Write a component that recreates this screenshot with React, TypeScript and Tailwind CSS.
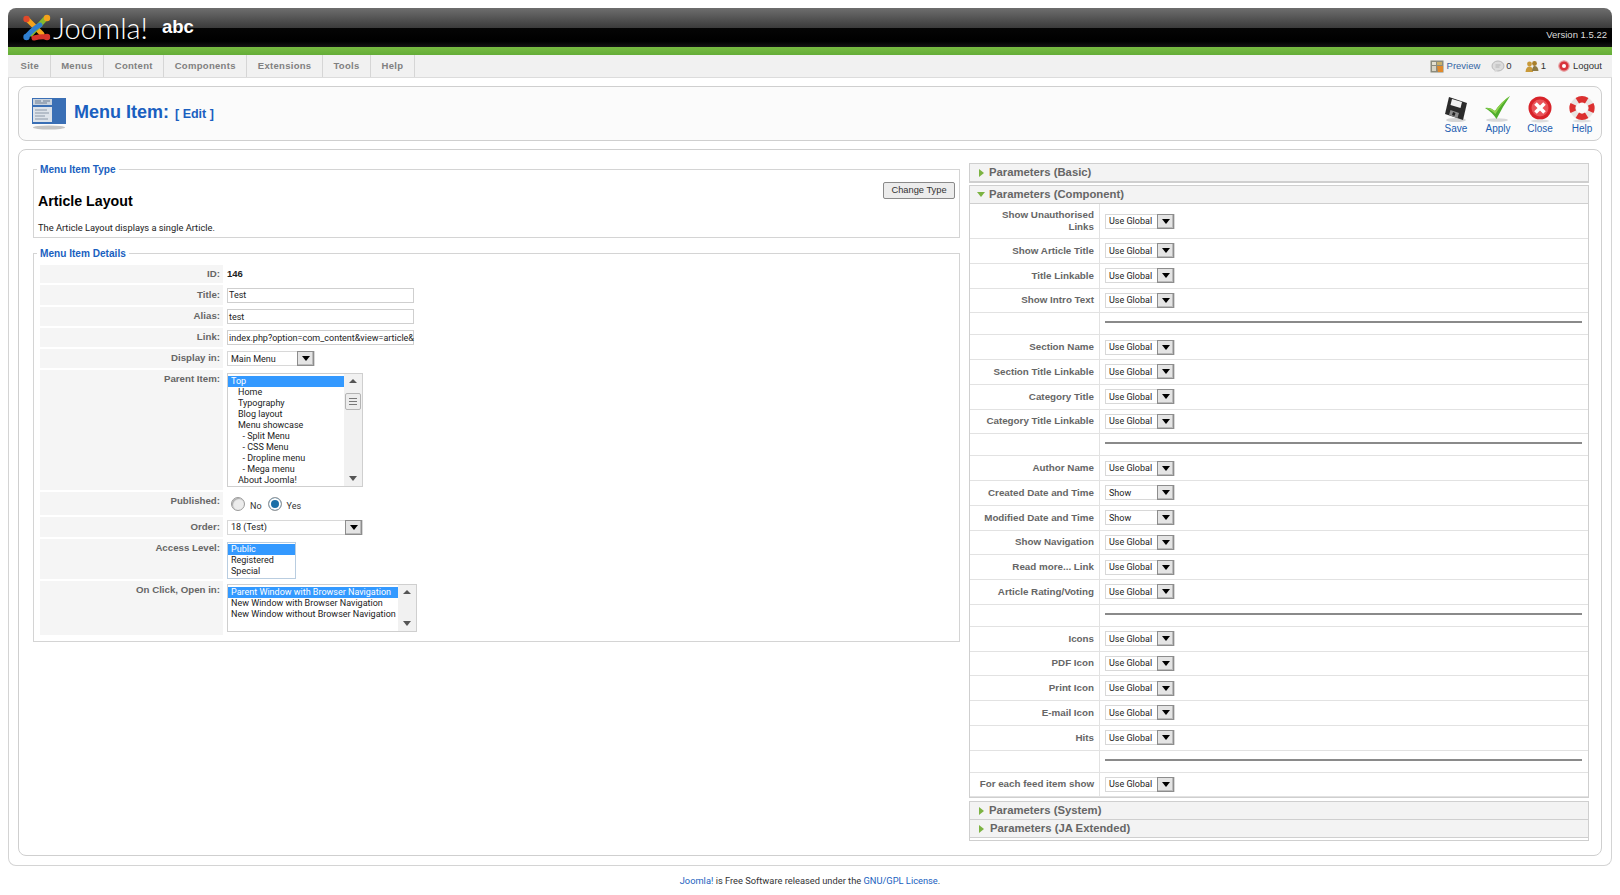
import React from "react";

const font = "font-['Liberation_Sans',Arial,sans-serif]";
const fieldFont = "font-['Roboto',Arial,sans-serif] text-[9px]";
const bodyFont = "font-['Roboto',Arial,sans-serif] text-[9.3px]";

const menuItems = ["Site", "Menus", "Content", "Components", "Extensions", "Tools", "Help"];

type ParamRow = { label: string; value?: string; tall?: boolean } | "sep";

const paramRows: ParamRow[] = [
  { label: "Show Unauthorised Links", tall: true },
  { label: "Show Article Title" },
  { label: "Title Linkable" },
  { label: "Show Intro Text" },
  "sep",
  { label: "Section Name" },
  { label: "Section Title Linkable" },
  { label: "Category Title" },
  { label: "Category Title Linkable" },
  "sep",
  { label: "Author Name" },
  { label: "Created Date and Time", value: "Show" },
  { label: "Modified Date and Time", value: "Show" },
  { label: "Show Navigation" },
  { label: "Read more... Link" },
  { label: "Article Rating/Voting" },
  "sep",
  { label: "Icons" },
  { label: "PDF Icon" },
  { label: "Print Icon" },
  { label: "E-mail Icon" },
  { label: "Hits" },
  "sep",
  { label: "For each feed item show" },
];

const parentItems = [
  "Home",
  "Typography",
  "Blog layout",
  "Menu showcase",
  "\u00a0\u00a0- Split Menu",
  "\u00a0\u00a0- CSS Menu",
  "\u00a0\u00a0- Dropline menu",
  "\u00a0\u00a0- Mega menu",
  "About Joomla!",
];

const JoomlaMark = () => (
  <svg width="30" height="28" viewBox="0 0 30 28" fill="none" strokeLinecap="round">
    <path d="M5 5 L20 20" stroke="#f4a21c" strokeWidth="5" />
    <path d="M24 4 L9 20" stroke="#86b82e" strokeWidth="5" />
    <path d="M5 22 Q12 14 18 11" stroke="#2f7fd0" strokeWidth="5" />
    <path d="M12 24 Q19 22 25 23" stroke="#d5352b" strokeWidth="5" />
    <circle cx="4.5" cy="5" r="3.2" fill="#e0482a" />
    <circle cx="25" cy="4" r="3.2" fill="#f4a21c" />
    <circle cx="4.5" cy="23" r="3.2" fill="#2f7fd0" />
    <circle cx="25" cy="23" r="3.2" fill="#d5352b" />
  </svg>
);

const PageIcon = () => (
  <svg width="36" height="34" viewBox="0 0 36 34">
    <rect x="1" y="1" width="34" height="26" fill="#3a6fb5" />
    <rect x="2" y="2" width="19" height="6" fill="#c9d3de" />
    <rect x="2" y="10" width="19" height="15" fill="#dde3ea" />
    <path d="M4 13h12M4 16h14M4 19h10M4 22h13" stroke="#8b98a8" strokeWidth="1" />
    <path d="M4 4h6M12 4h7M4 6h12" stroke="#6f7f93" strokeWidth="1" />
    <ellipse cx="18" cy="30.5" rx="16" ry="2" fill="#c4c4c4" />
  </svg>
);

const SaveIcon = () => (
  <svg width="30" height="28" viewBox="0 0 30 28">
    <ellipse cx="15" cy="25" rx="10" ry="2" fill="#d4d4d4" />
    <path d="M8 2 L26 8 L22 25 L4 19 Z" fill="#2b2b2b" />
    <path d="M11 4 L21 7 L19.5 13 L9.5 10 Z" fill="#f2f2f2" />
    <path d="M9.5 15 L18 18 L16.5 23 L8 20 Z" fill="#8d8d8d" />
    <path d="M12 17 L14.5 18 L13.5 21 L11 20 Z" fill="#222" />
  </svg>
);

const ApplyIcon = () => (
  <svg width="30" height="28" viewBox="0 0 30 28">
    <ellipse cx="14" cy="25" rx="11" ry="1.8" fill="#d8d8d8" />
    <path d="M2 13 Q7 12 12 16 Q18 7 27 1 Q20 11 13.5 24 Q9 17 2 13 Z" fill="#4fae2c" />
    <path d="M3 13 Q8 12.5 12 16 Q18 7 27 1 Q19 8 12.5 19 Q8 15 3 13 Z" fill="#8fd14f" />
  </svg>
);

const CloseIcon = () => (
  <svg width="28" height="28" viewBox="0 0 28 28">
    <circle cx="14" cy="13" r="11.5" fill="#d8232a" />
    <circle cx="14" cy="13" r="8.5" fill="#ea5359" />
    <path d="M9.5 8.5 L18.5 17.5 M18.5 8.5 L9.5 17.5" stroke="#fff" strokeWidth="3.6" />
    <ellipse cx="14" cy="26" rx="9" ry="1.5" fill="#ddd" />
  </svg>
);

const HelpIcon = () => (
  <svg width="28" height="28" viewBox="0 0 28 28">
    <ellipse cx="14" cy="26" rx="9" ry="1.5" fill="#ddd" />
    <circle cx="14" cy="13" r="9" fill="none" stroke="#e8e4e2" strokeWidth="6" />
    <path d="M7.6 3 A12 12 0 0 1 20.4 3 L17 8.6 A5 5 0 0 0 11 8.6 Z" fill="#dc3030" />
    <path d="M2.5 8 A12 12 0 0 0 2.5 18 L8 15.5 A5 5 0 0 1 8 10.5 Z" fill="#dc3030" />
    <path d="M25.5 8 A12 12 0 0 1 25.5 18 L20 15.5 A5 5 0 0 0 20 10.5 Z" fill="#dc3030" />
    <path d="M7.6 23 A12 12 0 0 0 20.4 23 L17 17.5 A5 5 0 0 1 11 17.5 Z" fill="#dc3030" />
  </svg>
);

const PreviewIcon = () => (
  <svg width="14" height="13" viewBox="0 0 14 13">
    <rect x="0.5" y="0.5" width="13" height="12" fill="#8b8b7d" />
    <rect x="2" y="2" width="4" height="3" fill="#e4e0cf" />
    <rect x="7" y="2" width="5" height="3" fill="#c9b06a" />
    <rect x="2" y="6" width="4" height="5" fill="#d8d4c4" />
    <path d="M7 6h6v6H8z" fill="#e08a2c" />
  </svg>
);

const MessageIcon = () => (
  <svg width="14" height="13" viewBox="0 0 14 13">
    <ellipse cx="7" cy="6" rx="6" ry="5" fill="#dcdcdc" stroke="#b8b8b8" />
    <path d="M4 10 L3.5 12.5 L7 10.5 Z" fill="#dcdcdc" />
    <path d="M4.5 5h5M4.5 7h4" stroke="#aaa" strokeWidth="0.8" />
  </svg>
);

const UsersIcon = () => (
  <svg width="14" height="13" viewBox="0 0 14 13">
    <circle cx="4.5" cy="4" r="2.4" fill="#c99a3a" />
    <circle cx="9.5" cy="3.5" r="2.4" fill="#a97f2a" />
    <path d="M0.5 12 Q1 6.5 4.5 6.5 Q8 6.5 8 12 Z" fill="#c99a3a" />
    <path d="M7 11 Q7.5 6 9.5 6 Q13 6 13.5 11 Z" fill="#8d7a45" />
  </svg>
);

const LogoutIcon = () => (
  <svg width="12" height="13" viewBox="0 0 12 13">
    <circle cx="6" cy="6" r="5.2" fill="#d8343c" stroke="#e7a2a4" strokeWidth="1.2" />
    <circle cx="6" cy="6" r="2" fill="#fff" />
  </svg>
);

const Arrow = ({ grey = false }: { grey?: boolean }) => (
  <span className={`block w-0 h-0 border-x-[4px] border-x-transparent border-t-[5px] ${grey ? "border-t-[#555]" : "border-t-black"}`} />
);

const ArrowUp = () => (
  <span className="block w-0 h-0 border-x-[4px] border-x-transparent border-b-[4px] border-b-[#555]" />
);

const Select = ({ value, width }: { value: string; width: string }) => (
  <div className={`flex items-center justify-between h-[15px] bg-white border border-[#d8d8d8] ${width}`}>
    <span className={`${fieldFont} pl-[3px] pt-[1px] text-[#222] leading-none whitespace-nowrap`}>{value}</span>
    <span className="shrink-0 flex items-center justify-center w-[17px] h-[15px] bg-[#e4e4e4] border border-[#8d8d8d] shadow-[inset_-1px_-1px_0_#bbb]">
      <Arrow />
    </span>
  </div>
);

const Input = ({ value }: { value: string }) => (
  <div className={`${fieldFont} flex items-center w-[187px] h-[15px] bg-white border border-[#cfcfcf] pl-[1px] pt-[1px] text-[#222] whitespace-nowrap leading-none`}>
    {value}
  </div>
);

const Scrollbar = ({ thumb = false }: { thumb?: boolean }) => (
  <div className="relative shrink-0 flex flex-col items-center justify-between w-[18px] bg-[#f1f1f1] py-[5px]">
    <ArrowUp />
    {thumb && (
      <div className="absolute top-[19px] left-[1px] w-[16px] h-[17px] bg-[#ececec] border border-[#b4b4b4] rounded-[2px] flex flex-col items-center justify-center gap-[2px]">
        <span className="block w-[8px] h-px bg-[#777]" />
        <span className="block w-[8px] h-px bg-[#777]" />
        <span className="block w-[8px] h-px bg-[#777]" />
      </div>
    )}
    <Arrow grey />
  </div>
);

const DetailRow = ({
  label,
  height,
  top = false,
  children,
}: {
  label: string;
  height: string;
  top?: boolean;
  children: React.ReactNode;
}) => (
  <div className={`flex ${height}`}>
    <div className={`w-[183px] shrink-0 bg-[#f5f5f5] flex justify-end pr-[3px] text-[9.7px] font-bold text-[#666] ${top ? "items-start pt-[2px]" : "items-center"}`}>
      {label}
    </div>
    <div className={`pl-[4px] flex ${top ? "items-start pt-[3px]" : "items-center"}`}>{children}</div>
  </div>
);

const Radio = ({ checked = false }: { checked?: boolean }) => (
  <span
    className={`block w-[14px] h-[14px] rounded-full border border-[#9b9b9b] ${
      checked ? "bg-[#1b6fa8] shadow-[inset_0_0_0_2px_#fff]" : "bg-[#ececec] shadow-[inset_1px_1px_1px_#aaa]"
    }`}
  />
);

const PanelHeader = ({ title, open = false, extra = false }: { title: string; open?: boolean; extra?: boolean }) => (
  <div className={`flex items-center h-[18px] bg-[#f3f3f3] border-b border-[#cfcfcf] pl-[7px] ${extra ? "gap-[5px]" : "gap-[4px]"}`}>
    <span className="w-[8px] flex justify-center">
      {open ? (
        <span className="block w-0 h-0 border-x-[4px] border-x-transparent border-t-[5px] border-t-[#7cb342]" />
      ) : (
        <span className="block w-0 h-0 border-y-[4px] border-y-transparent border-l-[5px] border-l-[#7cb342]" />
      )}
    </span>
    <span className="text-[11.3px] font-bold text-[#666] leading-none">{title}</span>
  </div>
);

const ToolButton = ({ label, children }: { label: string; children: React.ReactNode }) => (
  <div className="flex flex-col items-center w-[42px]">
    <div className="h-[30px] flex items-center justify-center">{children}</div>
    <span className="text-[10px] text-[#1a5cb0] leading-none">{label}</span>
  </div>
);

export default function App() {
  return (
    <div className={`${font} w-[1620px] h-[895px] overflow-hidden bg-white pt-[8px] px-[8px]`}>
      <div className="relative flex items-center h-[39px] rounded-t-[8px] bg-[linear-gradient(to_bottom,#6e6e6e_0%,#3c3c3c_50%,#050505_51%,#000_85%,#141414_100%)] pl-[14px]">
        <JoomlaMark />
        <span className="ml-[1px] font-['Lato',sans-serif] font-light text-[29px] leading-none text-white">Joomla!</span>
        <span className="ml-[14px] text-[18.5px] font-bold text-white leading-none">abc</span>
        <span className="ml-auto mr-[5px] mt-[16px] text-[9.5px] text-[#ddd]">Version 1.5.22</span>
      </div>
      <div className="h-[8px] bg-[linear-gradient(to_bottom,#78bb42,#64ad38)]" />

      <div className="flex items-center h-[23px] bg-[#f1f1f1] border-b border-[#dcdcdc] pl-[2px]">
        {menuItems.map((item) => (
          <div key={item} className="flex items-center h-full px-[10.5px] border-r border-[#d6d6d6] text-[9.5px] font-bold text-[#808080] tracking-[0.3px]">
            {item}
          </div>
        ))}
        <div className="ml-auto flex items-center pr-[10px] text-[9.5px] text-[#333]">
          <PreviewIcon />
          <span className="ml-[3px] text-[#3465a4]">Preview</span>
          <span className="ml-[11px]"><MessageIcon /></span>
          <span className="ml-[1px]">0</span>
          <span className="ml-[13px]"><UsersIcon /></span>
          <span className="ml-[2px]">1</span>
          <span className="ml-[12px]"><LogoutIcon /></span>
          <span className="ml-[3px]">Logout</span>
        </div>
      </div>

      <div className="h-[788px] border-x border-b border-[#d4d4d4] rounded-b-[8px] px-[9px] pt-[8px]">
        <div className="flex items-center justify-between h-[55px] bg-[#fbfbfb] border border-[#cfcfcf] rounded-[8px] pl-[12px] pr-0">
          <div className="flex items-center">
            <PageIcon />
            <h1 className="ml-[7px] mb-[3px] text-[18px] font-bold text-[#1a5fc0] leading-none">Menu Item:</h1>
            <span className="ml-[6px] mt-[1px] text-[12.5px] font-bold text-[#1a5fc0] leading-none">[ Edit ]</span>
          </div>
          <div className="flex mr-[-2px]">
            <ToolButton label="Save"><SaveIcon /></ToolButton>
            <ToolButton label="Apply"><ApplyIcon /></ToolButton>
            <ToolButton label="Close"><CloseIcon /></ToolButton>
            <ToolButton label="Help"><HelpIcon /></ToolButton>
          </div>
        </div>

        <div className="flex gap-[9px] h-[707px] mt-[8px] border border-[#cfcfcf] rounded-[8px] pl-[14px] pt-[12px] bg-white">
          <div className="w-[927px] shrink-0">
            <fieldset className="h-[76px] border border-[#d4d4d4] pl-[4px] pr-[4px]">
              <legend className="ml-[-1px] px-[3px] pt-[1px] text-[10.1px] leading-[14px] font-bold text-[#1a5fc0]">Menu Item Type</legend>
              <div className="flex justify-between">
                <div>
                  <h2 className="mt-[15px] text-[14.2px] font-bold text-black leading-[18px]">Article Layout</h2>
                  <p className={`${bodyFont} mt-[12px] text-[#222] leading-[12px]`}>The Article Layout displays a single Article.</p>
                </div>
                <button className="mt-[5px] w-[72px] h-[17px] bg-[#ececec] border border-[#8a8a8a] rounded-[2px] text-[9.3px] text-[#333] leading-none">
                  Change Type
                </button>
              </div>
            </fieldset>

            <fieldset className="mt-[8px] border border-[#d4d4d4] pl-[6px] pr-[5px] pt-[4px] pb-[6px]">
              <legend className="ml-[-3px] px-[3px] pt-[1px] text-[10.1px] leading-[14px] font-bold text-[#1a5fc0]">Menu Item Details</legend>
              <div className="flex flex-col gap-[2px]">
                <DetailRow label="ID:" height="h-[18px]">
                  <span className="text-[9.5px] font-bold text-[#222]">146</span>
                </DetailRow>
                <DetailRow label="Title:" height="h-[20px]"><Input value="Test" /></DetailRow>
                <DetailRow label="Alias:" height="h-[19px]"><Input value="test" /></DetailRow>
                <DetailRow label="Link:" height="h-[19px]"><Input value="index.php?option=com_content&view=article&" /></DetailRow>
                <DetailRow label="Display in:" height="h-[19px]"><Select value="Main Menu" width="w-[88px]" /></DetailRow>
                <DetailRow label="Parent Item:" height="h-[120px]" top>
                  <div className="flex w-[136px] h-[114px] border border-[#cfcfcf] bg-white">
                    <div className={`${fieldFont} flex-1 leading-[11px] text-[#222] pt-[2px] whitespace-nowrap`}>
                      <div className="bg-[#3399ff] text-white pl-[3px]">Top</div>
                      {parentItems.map((p) => (
                        <div key={p} className="pl-[10px]">{p}</div>
                      ))}
                    </div>
                    <Scrollbar thumb />
                  </div>
                </DetailRow>
                <DetailRow label="Published:" height="h-[23px]" top>
                  <div className={`${fieldFont} flex items-center pl-[4px] text-[#333]`}>
                    <Radio />
                    <span className="ml-[5px] mt-[5px]">No</span>
                    <span className="ml-[6px]"><Radio checked /></span>
                    <span className="ml-[5px] mt-[5px]">Yes</span>
                  </div>
                </DetailRow>
                <DetailRow label="Order:" height="h-[20px]"><Select value="18 (Test)" width="w-[136px]" /></DetailRow>
                <DetailRow label="Access Level:" height="h-[40px]" top>
                  <div className={`${fieldFont} w-[69px] h-[37px] border border-[#b9cde0] bg-white leading-[11px] text-[#222] pt-[1px]`}>
                    <div className="bg-[#3399ff] text-white pl-[3px]">Public</div>
                    <div className="pl-[3px]">Registered</div>
                    <div className="pl-[3px]">Special</div>
                  </div>
                </DetailRow>
                <DetailRow label="On Click, Open in:" height="h-[54px]" top>
                  <div className="flex w-[190px] h-[48px] border border-[#cfcfcf] bg-white">
                    <div className={`${fieldFont} flex-1 min-w-0 leading-[11px] text-[#222] pt-[2px] whitespace-nowrap`}>
                      <div className="bg-[#3399ff] text-white pl-[3px]">Parent Window with Browser Navigation</div>
                      <div className="pl-[3px]">New Window with Browser Navigation</div>
                      <div className="pl-[3px]">New Window without Browser Navigation</div>
                    </div>
                    <Scrollbar />
                  </div>
                </DetailRow>
              </div>
            </fieldset>
          </div>

          <div className="w-[620px] shrink-0 pt-[1px]">
            <div className="border border-[#cfcfcf]">
              <PanelHeader title="Parameters (Basic)" />
            </div>
            <div className="mt-[2px] border border-[#cfcfcf]">
              <PanelHeader title="Parameters (Component)" open />
              {paramRows.map((row, i) =>
                row === "sep" ? (
                  <div key={i} className="flex h-[22px] border-b border-[#e2e2e2]">
                    <div className="w-[130px] shrink-0 border-r border-[#e2e2e2]" />
                    <div className="flex-1 flex items-center pl-[5px] pr-[6px]">
                      <div className="w-full h-[2px] bg-[#8a8a8a] mb-[3px]" />
                    </div>
                  </div>
                ) : (
                  <div key={row.label} className={`flex border-b border-[#e2e2e2] ${row.tall ? "h-[35px]" : "h-[24.75px]"}`}>
                    <div className={`w-[130px] shrink-0 flex items-center justify-end text-right pr-[5px] border-r border-[#e2e2e2] text-[9.8px] leading-[12px] font-bold text-[#666] ${row.tall ? "pl-[28px]" : "pl-[2px]"}`}>
                      {row.label}
                    </div>
                    <div className="flex-1 flex items-center pl-[5px]">
                      <Select value={row.value ?? "Use Global"} width="w-[70px]" />
                    </div>
                  </div>
                )
              )}
            </div>
            <div className="mt-[3px] border border-[#cfcfcf] h-[40px]">
              <PanelHeader title="Parameters (System)" />
              <PanelHeader title="Parameters (JA Extended)" extra />
            </div>
          </div>
        </div>
      </div>

      <p className={`${bodyFont} mt-[9px] text-center text-[#333] leading-[12px]`}>
        <span className="text-[#1a5fc0]">Joomla!</span> is Free Software released under the{" "}
        <span className="text-[#1a5fc0]">GNU/GPL License</span>.
      </p>
    </div>
  );
}
